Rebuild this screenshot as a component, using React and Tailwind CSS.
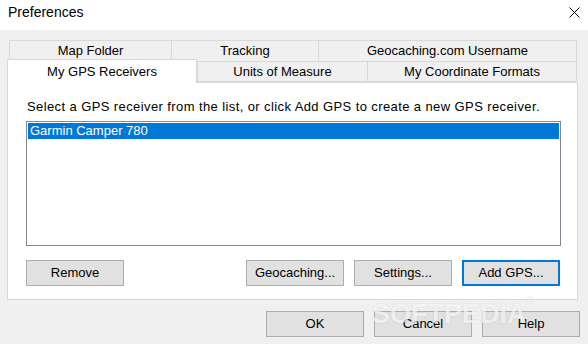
import React from 'react';

const FONT = { fontFamily: '"Liberation Sans", Arial, sans-serif' };

function Tab({ label, w, selected }) {
  if (selected) {
    return (
      <div
        className="relative z-10 flex h-[24px] items-start justify-center border border-b-0 border-[#d9d9d9] bg-white pt-[2px]"
        style={{ width: w }}
      >
        {label}
      </div>
    );
  }
  return (
    <div
      className="mt-[2px] flex h-[21px] items-center justify-center border border-r-0 border-[#d9d9d9] bg-[#f0f0f0] last:border-r"
      style={{ width: w }}
    >
      {label}
    </div>
  );
}

function Button({ children, focused }) {
  return (
    <button
      type="button"
      className={`h-[26px] w-[98px] bg-[#e1e1e1] text-[13px] text-black ${
        focused ? 'border-2 border-[#0078d7]' : 'border border-[#adadad]'
      }`}
    >
      {children}
    </button>
  );
}

export default function App() {
  return (
    <div className="relative h-[344px] w-[588px] overflow-hidden bg-[#f0f0f0] text-[13px] text-black" style={FONT}>
      {/* title bar */}
      <div className="flex h-[30px] items-start justify-between bg-white pl-[8px] pr-[14px] pt-[3px]">
        <span className="text-[14px] leading-[18px]">Preferences</span>
        <svg width="11" height="11" viewBox="0 0 11 11" className="mt-[4px] mr-[-6px]">
          <path d="M0.5 0.5 L10.5 10.5 M10.5 0.5 L0.5 10.5" stroke="#000" strokeWidth="1" />
        </svg>
      </div>

      {/* tab rows */}
      <div className="mt-[10px] flex h-[21px] pl-[9px]">
        <div className="flex h-[21px] w-[162px] items-center justify-center border border-b-0 border-r-0 border-[#d9d9d9] bg-[#f0f0f0]">
          Map Folder
        </div>
        <div className="flex h-[21px] w-[147px] items-center justify-center border border-b-0 border-r-0 border-[#d9d9d9] bg-[#f0f0f0]">
          Tracking
        </div>
        <div className="flex h-[21px] w-[259px] items-center justify-center border border-b-0 border-[#d9d9d9] bg-[#f0f0f0]">
          Geocaching.com Username
        </div>
      </div>
      <div className="-mt-[2px] flex h-[23px] pl-[7px]">
        <Tab label="My GPS Receivers" w={190} selected />
        <Tab label="Units of Measure" w={170} />
        <Tab label="My Coordinate Formats" w={210} />
      </div>

      {/* panel */}
      <div className="ml-[7px] flex h-[218px] w-[571px] flex-col border border-[#d9d9d9] bg-white pl-[18px] pr-[17px]">
        <p className="mt-[16px] pl-[1px] leading-[16px] tracking-[0.4px]">
          Select a GPS receiver from the list, or click Add GPS to create a new GPS receiver.
        </p>
        <div className="mt-[6px] h-[125px] w-[535px] border border-[#828790] p-px">
          <div className="h-[16px] bg-[#0078d7] pl-[2px] leading-[16px] text-white">Garmin Camper 780</div>
        </div>
        <div className="mt-[14px] flex">
          <Button>Remove</Button>
          <div className="ml-auto flex gap-[10px]">
            <Button>Geocaching...</Button>
            <Button>Settings...</Button>
            <Button focused>Add GPS...</Button>
          </div>
        </div>
      </div>

      {/* dialog buttons */}
      <div className="mt-[11px] flex justify-end gap-[10px] pr-[8px]">
        <Button>OK</Button>
        <Button>Cancel</Button>
        <Button>Help</Button>
      </div>

      {/* watermark */}
      <div
        className="pointer-events-none absolute left-[372px] top-[294px] text-[27px] font-bold text-white/70"
        style={{ fontFamily: '"Liberation Sans", Arial, sans-serif', textShadow: '0 0 2px rgba(0,0,0,0.12)' }}
      >
        SOFTPEDIA<span className="align-top text-[9px]">®</span>
      </div>
    </div>
  );
}
